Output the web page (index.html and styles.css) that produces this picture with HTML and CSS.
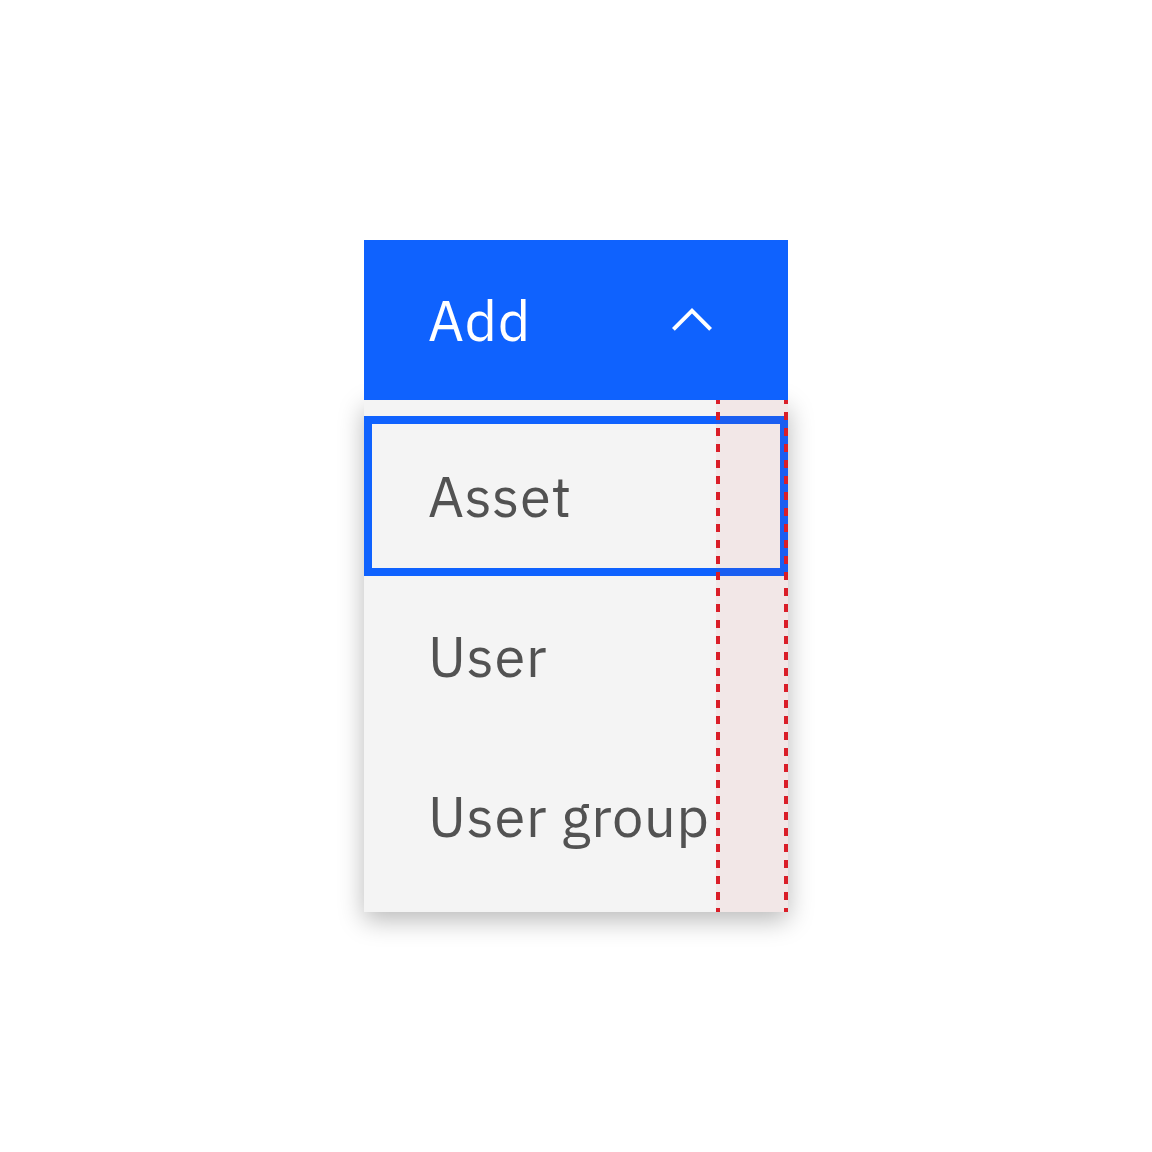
FILE: index.html
```html
<!DOCTYPE html>
<html lang="en">
<head>
	<meta charset="UTF-8">
	<title>Add menu</title>
	<link rel="stylesheet" href="styles.css">
</head>
<body>
	<div class="stage">
		<div class="dropdown">
			<button class="trigger" type="button">
				<span class="trigger-label">Add</span>
				<svg class="chevron" viewBox="0 0 16 16" width="64" height="64" aria-hidden="true">
					<path d="M8 5L13 10 12.3 10.7 8 6.4 3.7 10.7 3 10z" fill="#fff"/>
				</svg>
			</button>
			<ul class="menu">
				<li class="menu-item focused">Asset</li>
				<li class="menu-item">User</li>
				<li class="menu-item">User group</li>
			</ul>
		</div>
	</div>
</body>
</html>
```

FILE: styles.css
```css
* {
	margin: 0;
	padding: 0;
	box-sizing: border-box;
}
html, body {
	background: #fff;
}
body {
	min-height: 1152px;
	font-family: "IBM Plex Sans", "Noto Sans", "Open Sans", sans-serif;
}
.stage {
	padding: 240px 0 240px 364px;
}
.dropdown {
	width: 424px;
}
.trigger {
	position: relative;
	z-index: 1;
	display: flex;
	align-items: center;
	justify-content: space-between;
	width: 100%;
	height: 160px;
	padding: 0 64px 0 64px;
	border: none;
	background: #0f62fe;
	color: #fff;
	font-family: inherit;
	font-size: 56px;
	letter-spacing: 0.64px;
	cursor: pointer;
}
.trigger-label {
	line-height: 1;
}
.chevron {
	display: block;
}
.menu {
	position: relative;
	list-style: none;
	padding: 16px 0;
	background: #f4f4f4;
	box-shadow: 0 8px 24px rgba(0, 0, 0, 0.28);
}
/* spacing annotation over the right side of the menu */
.menu::after {
	content: "";
	position: absolute;
	top: 0;
	bottom: 0;
	left: 352px;
	width: 72px;
	background-color: rgba(218, 30, 40, 0.06);
	background-image:
		repeating-linear-gradient(to bottom, #da1e28 0 4px, transparent 4px 12px, #da1e28 12px 16px),
		repeating-linear-gradient(to bottom, #da1e28 0 4px, transparent 4px 12px, #da1e28 12px 16px);
	background-size: 4px 100%, 4px 100%;
	background-position: left top, right top;
	background-repeat: no-repeat;
	pointer-events: none;
}
.menu-item {
	display: flex;
	align-items: center;
	height: 160px;
	padding-left: 64px;
	color: #525252;
	font-size: 56px;
	letter-spacing: 0.64px;
}
.menu-item.focused {
	outline: 8px solid #0f62fe;
	outline-offset: -8px;
}
```
